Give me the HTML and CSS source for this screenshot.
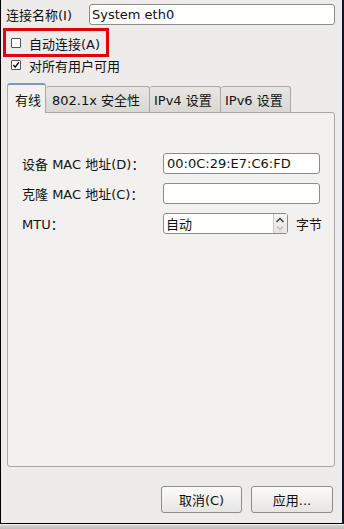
FILE: index.html
```html
<!DOCTYPE html>
<html lang="zh-CN">
<head>
    <title>编辑 System eth0</title>
    <meta charset="utf-8">
    <meta name="viewport" content="width=device-width, initial-scale=1">
    <link rel="stylesheet" href="styles.css">
</head>
<body>
<div class="dialog">
    <div class="name-row">
        <span class="name-label">连接名称(I)</span>
        <input class="input name-input" type="text" value="System eth0">
    </div>

    <label class="check-row check-row-marked">
        <span class="checkbox"></span>
        <span>自动连接(A)</span>
    </label>
    <label class="check-row">
        <span class="checkbox">
            <svg width="10" height="10" viewBox="0 0 10 10"><path d="M1.6 5 L4 7.6 L8.6 1.6" fill="none" stroke="#111" stroke-width="1.8"/></svg>
        </span>
        <span>对所有用户可用</span>
    </label>

    <div class="tabs">
        <span class="tab tab-active">有线</span>
        <span class="tab">802.1x 安全性</span>
        <span class="tab">IPv4 设置</span>
        <span class="tab">IPv6 设置</span>
    </div>

    <div class="panel">
        <div class="field">
            <span class="field-label">设备 MAC 地址(D)<span class="colon">：</span></span>
            <input class="input field-input" type="text" value="00:0C:29:E7:C6:FD">
        </div>
        <div class="field">
            <span class="field-label">克隆 MAC 地址(C)<span class="colon">：</span></span>
            <input class="input field-input" type="text" value="">
        </div>
        <div class="field">
            <span class="field-label">MTU<span class="colon">：</span></span>
            <div class="spin">
                <span class="spin-value">自动</span>
                <span class="spin-arrows">
                    <svg width="12" height="18" viewBox="0 0 12 18">
                        <path d="M2.5 7 L6 3.5 L9.5 7" fill="none" stroke="#333" stroke-width="1.3"/>
                        <path d="M3 11.5 L6 14.5 L9 11.5" fill="none" stroke="#b5b4b1" stroke-width="1.1"/>
                    </svg>
                </span>
            </div>
            <span class="unit">字节</span>
        </div>
    </div>

    <div class="actions">
        <button class="button" type="button">取消(C)</button>
        <button class="button" type="button">应用...</button>
    </div>
</div>
<div class="taskbar"></div>
</body>
</html>
```

FILE: styles.css
```css
*, *::before, *::after {
    margin: 0;
    padding: 0;
    box-sizing: border-box;
}

body {
    width: 344px;
    height: 529px;
    overflow: hidden;
    background-color: #c9c8c4;
    color: #111111;
    font-family: "DejaVu Sans", "Noto Sans CJK SC", sans-serif;
    font-size: 13px;
}

.dialog {
    width: 344px;
    height: 524px;
    display: flex;
    flex-direction: column;
    border-left: 1px solid #000000;
    border-right: 2px solid #12121e;
    border-bottom: 1px solid #000000;
    background-color: #edeceb;
}

.name-row {
    display: flex;
    align-items: center;
    padding: 4px 7px 0 5px;
}

.name-label {
    width: 83px;
    flex-shrink: 0;
}

.input {
    height: 21px;
    border: 1px solid #8d8c89;
    border-radius: 3px;
    padding: 0 3px;
    background-color: #ffffff;
    color: #111111;
    font-family: inherit;
    font-size: inherit;
    outline: none;
}

.name-input {
    flex: 1;
    height: 21px;
    padding-left: 2px;
}

.check-row {
    display: flex;
    align-items: center;
    height: 16px;
    padding-left: 10px;
}

.check-row-marked {
    width: 106px;
    height: 29px;
    margin: 3px 0 0 2px;
    padding-left: 5px;
    padding-top: 1px;
    border: 3px solid #e3000b;
}

.checkbox {
    display: flex;
    align-items: center;
    justify-content: center;
    width: 10px;
    height: 10px;
    margin-right: 8px;
    border: 1px solid #505050;
    border-radius: 1px;
    background-color: #ffffff;
}

.tabs {
    display: flex;
    align-items: flex-end;
    margin: 10px 7px 0 6px;
    position: relative;
    z-index: 1;
}

.tab {
    height: 26px;
    padding: 0 6px;
    display: flex;
    align-items: center;
    border: 1px solid #a9a8a5;
    border-bottom: none;
    border-left: none;
    border-radius: 3px 3px 0 0;
    background: linear-gradient(#e7e6e3, #d9d8d4);
    white-space: nowrap;
}

.tab-active {
    width: 39px;
    height: 30px;
    margin-bottom: -1px;
    padding-left: 7px;
    border-left: 1px solid #a9a8a5;
    border-top: 2px solid #7d98bd;
    background: #f2f1f0;
}

.tab:nth-child(2) {
    width: 104px;
    padding-left: 6px;
}

.tab:nth-child(3) {
    width: 71px;
    padding-left: 4px;
}

.tab:nth-child(4) {
    width: 70px;
    padding-left: 4px;
}

.panel {
    height: 355px;
    margin: 0 7px 0 6px;
    padding: 40px 0 0 14px;
    display: flex;
    flex-direction: column;
    gap: 9px;
    border: 1px solid #a9a8a5;
    border-radius: 0 3px 3px 3px;
    background-color: #f2f1f0;
}

.field {
    display: flex;
    align-items: center;
}

.field-label {
    width: 141px;
    flex-shrink: 0;
    white-space: nowrap;
}

.colon {
    font-family: "Noto Sans CJK JP", sans-serif;
}

.field-input {
    width: 157px;
    height: 21px;
}

.spin {
    display: flex;
    align-items: center;
    width: 125px;
    height: 21px;
    border: 1px solid #8d8c89;
    border-radius: 3px;
    background-color: #ffffff;
}

.spin-value {
    flex: 1;
    padding-left: 2px;
}

.spin-arrows {
    display: flex;
    align-items: center;
    width: 14px;
    height: 19px;
    border-left: 1px solid #c9c8c5;
    background: linear-gradient(#f6f6f5, #e4e3e0);
}

.unit {
    margin-left: 8px;
}

.actions {
    display: flex;
    justify-content: flex-end;
    gap: 9px;
    margin-top: 19px;
    padding-right: 9px;
}

.button {
    width: 81px;
    height: 27px;
    border: 1px solid #8e8d8a;
    border-radius: 3px;
    background: linear-gradient(#fbfbfa, #e6e5e2);
    color: #111111;
    font-family: inherit;
    font-size: inherit;
}

.button + .button {
    width: 82px;
}

.taskbar {
    height: 5px;
    border-top: 1px solid #f2f1ef;
    background: linear-gradient(#d4d3cf, #bebdb9);
}
```
